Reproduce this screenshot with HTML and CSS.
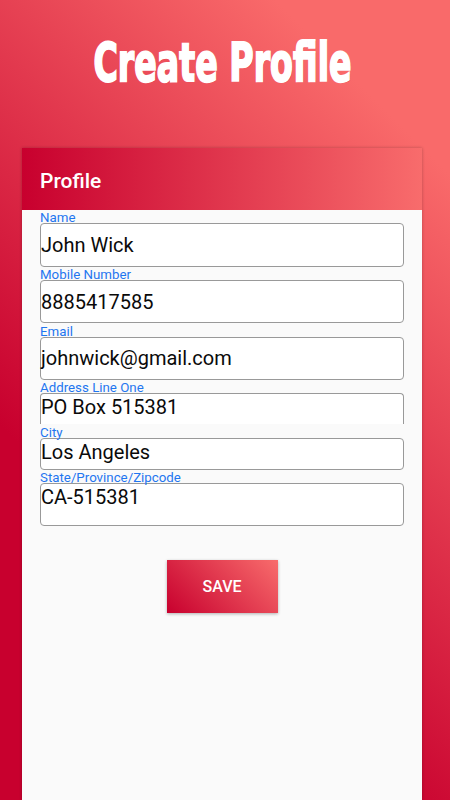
FILE: index.html
```html
<!DOCTYPE html>
<html lang="en">
<head>
<meta charset="utf-8">
<title>Create Profile</title>
<link rel="stylesheet" href="styles.css">
</head>
<body>
<div class="screen">
  <h1 class="title"><span class="title-text">Create Profile</span></h1>
  <div class="card">
    <div class="card-header">Profile</div>
    <div class="card-body">
      <div class="field">
        <div class="label">Name</div>
        <div class="box box-center h44">John Wick</div>
      </div>
      <div class="field">
        <div class="label">Mobile Number</div>
        <div class="box box-center h43">8885417585</div>
      </div>
      <div class="field">
        <div class="label">Email</div>
        <div class="box box-center h43">johnwick@gmail.com</div>
      </div>
      <div class="field">
        <div class="label">Address Line One</div>
        <div class="box box-top box-cut">PO Box 515381</div>
      </div>
      <div class="field">
        <div class="label">City</div>
        <div class="box box-top h32">Los Angeles</div>
      </div>
      <div class="field">
        <div class="label">State/Province/Zipcode</div>
        <div class="box box-top h43">CA-515381</div>
      </div>
      <div class="actions">
        <button class="save" type="button">SAVE</button>
      </div>
    </div>
  </div>
</div>
</body>
</html>
```

FILE: styles.css
```css
html, body {
  margin: 0;
  height: 100%;
}

body {
  background: linear-gradient(45deg, #c8002e 30%, #f96a6a 86%);
  font-family: Roboto, "Liberation Sans", sans-serif;
  overflow: hidden;
}

.screen {
  height: 800px;
  padding: 0 28px 0 22px;
  display: flex;
  flex-direction: column;
  box-sizing: border-box;
}

.title {
  margin: 36px 0 0;
  height: 54px;
  text-align: center;
  font-family: "DejaVu Sans Condensed", "DejaVu Sans", sans-serif;
  font-stretch: condensed;
  font-weight: bold;
  font-size: 54px;
  line-height: 54px;
  color: #fff;
}

.title-text {
  display: inline-block;
  transform: scaleX(0.685);
  -webkit-text-stroke: 2px #fff;
  text-shadow: 1px 1px 0 #e8001c;
  white-space: nowrap;
}

.card {
  margin-top: 58px;
  flex: 1;
  display: flex;
  flex-direction: column;
  box-shadow: 0 0 3px rgba(0, 0, 0, 0.25);
}

.card-header {
  height: 62px;
  box-sizing: border-box;
  padding: 3px 0 0 18px;
  display: flex;
  align-items: center;
  background: linear-gradient(to right, #c8002e, #f86c6c);
  color: #fff;
  font-size: 21px;
  font-weight: 500;
}

.card-body {
  flex: 1;
  background: #fafafa;
  padding: 2px 18px 0;
}

.field {
  margin-bottom: 2.4px;
}

.label {
  height: 11px;
  font-size: 13.3px;
  line-height: 11px;
  color: #1f76f0;
  white-space: nowrap;
}

.box {
  box-sizing: border-box;
  background: #fff;
  border: 1px solid #999;
  border-radius: 4px;
  font-size: 20px;
  color: #0a0a0a;
  white-space: nowrap;
}

.box-center {
  display: flex;
  align-items: center;
}

.box-top {
  padding-top: 1px;
}

.h44 { height: 44px; }
.h43 { height: 43px; }
.h32 { height: 32px; }

.box-cut {
  height: 31px;
  border-bottom: none;
  border-radius: 4px 4px 0 0;
  overflow: hidden;
}

.actions {
  display: flex;
  justify-content: center;
  margin-top: 34px;
}

.save {
  width: 111px;
  height: 53px;
  border: 0;
  background: linear-gradient(45deg, #c8002e, #f86c6c);
  color: #fff;
  font-family: Roboto, "Liberation Sans", sans-serif;
  font-size: 16px;
  font-weight: 500;
  box-shadow: 0 1px 3px rgba(0, 0, 0, 0.3);
}
```
